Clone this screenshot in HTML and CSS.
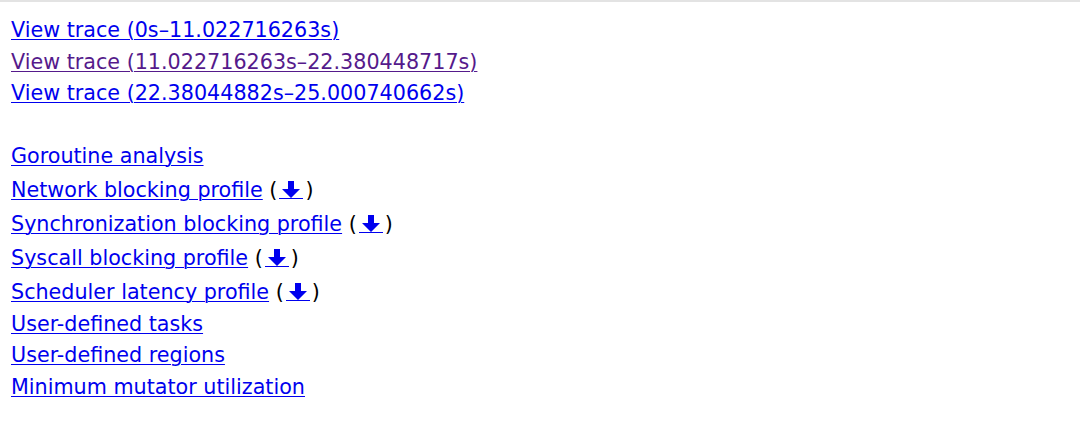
FILE: index.html
```html
<!DOCTYPE html>
<html>
<head>
<meta charset="utf-8">
<link rel="stylesheet" href="styles.css">
</head>
<body>
<div class="frame">
  <div class="content">
    <a class="link" href="#a">View trace (0s–11.022716263s)</a><br>
    <a class="link visited" href="#b">View trace (11.022716263s–22.380448717s)</a><br>
    <a class="link" href="#c">View trace (22.38044882s–25.000740662s)</a><br>
    <br>
    <a class="link" href="#g">Goroutine analysis</a><br>
    <span class="dl-row"><a class="link" href="#n">Network blocking profile</a> (<a class="link arrow" href="#n1"><svg class="dl" viewBox="0 0 20 17" width="20" height="17"><path d="M7 0h6v8h6L10 17 1 8h6z" fill="currentColor"/></svg></a>)</span><br>
    <span class="dl-row"><a class="link" href="#s">Synchronization blocking profile</a> (<a class="link arrow" href="#s1"><svg class="dl" viewBox="0 0 20 17" width="20" height="17"><path d="M7 0h6v8h6L10 17 1 8h6z" fill="currentColor"/></svg></a>)</span><br>
    <span class="dl-row"><a class="link" href="#y">Syscall blocking profile</a> (<a class="link arrow" href="#y1"><svg class="dl" viewBox="0 0 20 17" width="20" height="17"><path d="M7 0h6v8h6L10 17 1 8h6z" fill="currentColor"/></svg></a>)</span><br>
    <span class="dl-row"><a class="link" href="#l">Scheduler latency profile</a> (<a class="link arrow" href="#l1"><svg class="dl" viewBox="0 0 20 17" width="20" height="17"><path d="M7 0h6v8h6L10 17 1 8h6z" fill="currentColor"/></svg></a>)</span><br>
    <a class="link" href="#t">User-defined tasks</a><br>
    <a class="link" href="#r">User-defined regions</a><br>
    <a class="link" href="#m">Minimum mutator utilization</a><br>
  </div>
</div>
</body>
</html>
```
FILE: styles.css
```css
html, body {
  margin: 0;
  padding: 0;
  background: #ffffff;
}
.frame {
  border-top: 2px solid #e3e3e3;
  width: 1080px;
  height: 442px;
}
.content {
  padding: 13px 0 0 11px;
  font-family: "DejaVu Sans", sans-serif;
  font-size: 20.7px;
  line-height: 31.5px;
  color: #000000;
}
.link {
  color: #0000ee;
  text-decoration: underline;
  text-underline-offset: 2px;
  text-decoration-thickness: 1px;
}
.link.visited {
  color: #551a8b;
}
.dl-row {
  display: inline-block;
  line-height: 34px;
}
.arrow {
  display: inline-block;
  line-height: 1;
  margin: 0 2px;
  padding: 0 2px;
  border-bottom: 1px solid #0000ee;
  text-decoration: none;
  vertical-align: -2px;
}
.dl {
  display: block;
}
```
